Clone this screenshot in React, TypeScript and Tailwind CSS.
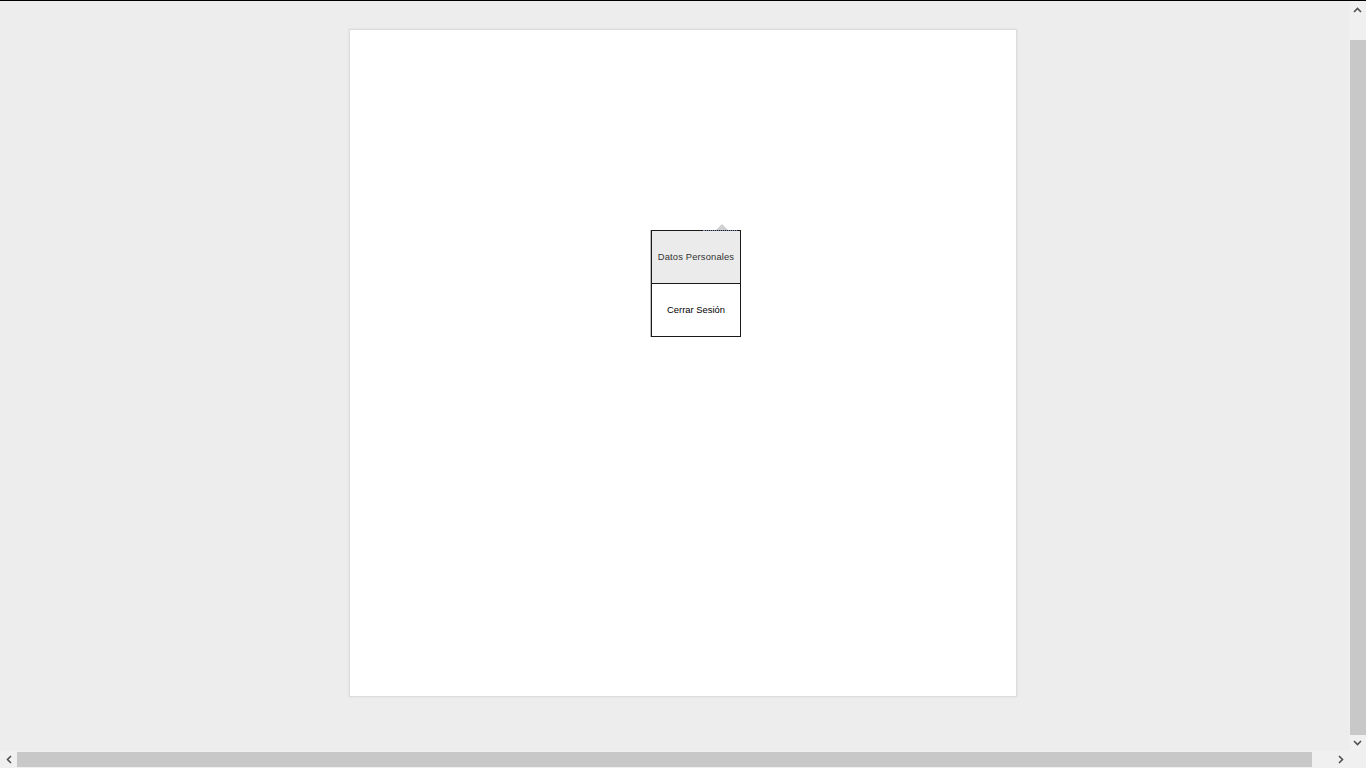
export default function App() {
  return (
    <div className="w-[1366px] h-[768px] overflow-hidden bg-[#ededed] flex flex-col" style={{ fontFamily: '"Liberation Sans", Arial, sans-serif' }}>
      <div className="h-px bg-black shrink-0" />
      <div className="flex flex-1 min-h-0">
        {/* area principal */}
        <div className="flex-1 relative">
          <div className="ml-[349px] mt-[28px] w-[668px] h-[668px] bg-white border border-[#dcdcdc] shadow-[0_0_2px_rgba(0,0,0,0.08)] relative">
            {/* menu de usuario */}
            <div className="absolute left-[301px] top-[200px] w-[90px]">
              <div className="absolute right-[13px] -top-[6px] w-0 h-0 border-l-[6px] border-r-[6px] border-b-[6px] border-l-transparent border-r-transparent border-b-[#d0d0d0]" />
              <div className="absolute right-[4px] top-0 w-[34px] h-px border-t border-dotted border-[#7a8ab0]" />
              <div className="border border-[#1a1a1a] bg-white shadow-[-1px_0_0_rgba(0,0,0,0.25)]">
                <div className="h-[53px] flex items-center justify-center bg-[#ebebeb] border-b border-[#1a1a1a] text-[9.4px] text-[#333] tracking-[0.15px]">
                  Datos Personales
                </div>
                <div className="h-[52px] flex items-center justify-center text-[9.4px] text-black">
                  Cerrar Sesión
                </div>
              </div>
            </div>
          </div>
        </div>
        {/* barra vertical */}
        <div className="w-[17px] bg-[#f0f0f0] flex flex-col items-center">
          <div className="h-[17px] w-full flex items-center justify-center">
            <svg width="9" height="6" viewBox="0 0 9 6"><path d="M1 5 L4.5 1.5 L8 5" stroke="#505050" strokeWidth="1.6" fill="none" /></svg>
          </div>
          <div className="mt-[22px] w-[16px] ml-px h-[695px] bg-[#c8c8c8]" />
          <div className="flex-1 w-full flex items-center justify-center">
            <svg width="9" height="6" viewBox="0 0 9 6"><path d="M1 1 L4.5 4.5 L8 1" stroke="#505050" strokeWidth="1.6" fill="none" /></svg>
          </div>
        </div>
      </div>
      {/* barra horizontal */}
      <div className="h-[17px] bg-[#f0f0f0] flex shrink-0">
        <div className="w-[17px] flex items-center justify-center">
          <svg width="6" height="9" viewBox="0 0 6 9"><path d="M5 1 L1.5 4.5 L5 8" stroke="#505050" strokeWidth="1.6" fill="none" /></svg>
        </div>
        <div className="w-[1295px] mt-px h-[15px] bg-[#c8c8c8]" />
        <div className="ml-[20px] w-[17px] flex items-center justify-center">
          <svg width="6" height="9" viewBox="0 0 6 9"><path d="M1 1 L4.5 4.5 L1 8" stroke="#505050" strokeWidth="1.6" fill="none" /></svg>
        </div>
      </div>
    </div>
  );
}
